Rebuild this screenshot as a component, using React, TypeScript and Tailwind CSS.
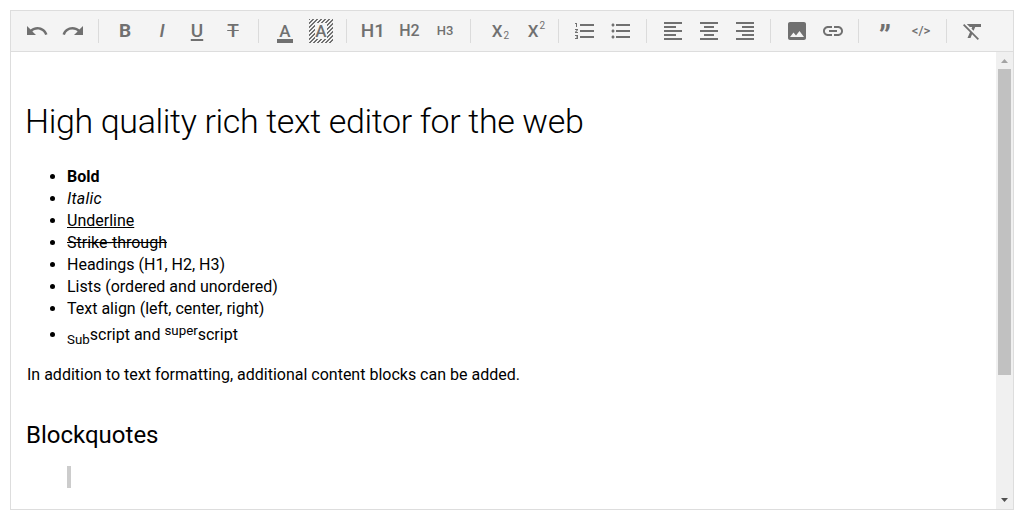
import React from "react";
import {
  MdUndo, MdRedo, MdFormatListNumbered, MdFormatListBulleted, MdFormatAlignLeft,
  MdFormatAlignCenter, MdFormatAlignRight, MdImage, MdFormatClear, MdInsertLink,
} from "react-icons/md";

function Group({ children, last = false }: { children: React.ReactNode; last?: boolean }) {
  return (
    <div className="flex items-center">
      <div className="flex pl-2 pr-[7px]">{children}</div>
      {!last && <div className="h-6 w-px bg-[#dbdbdb]" />}
    </div>
  );
}

function Tool({ label, children }: { label: string; children: React.ReactNode }) {
  return (
    <button aria-label={label} className="flex h-10 w-9 items-center justify-center whitespace-nowrap text-[19px] leading-6 font-medium text-[#707070]">
      {children}
    </button>
  );
}

function Toolbar() {
  return (
    <div className="flex h-[41px] shrink-0 border-b border-[#dddddd] bg-[#f4f4f4]">
      <Group>
        <Tool label="Undo"><MdUndo size={24} /></Tool>
        <Tool label="Redo"><MdRedo size={24} /></Tool>
      </Group>
      <Group>
        <Tool label="Bold"><span className="font-bold">B</span></Tool>
        <Tool label="Italic"><span className="pl-0.5 italic">I</span></Tool>
        <Tool label="Underline"><span className="underline decoration-2 underline-offset-2">U</span></Tool>
        <Tool label="Strike-through"><span className="line-through">T</span></Tool>
      </Group>
      <Group>
        <Tool label="Text color">
          <span className="flex h-6 w-4 flex-col items-center justify-between text-[17px]">
            <span className="h-5">A</span>
            <span className="h-1 w-4 shrink-0 bg-[#707070]" />
          </span>
        </Tool>
        <Tool label="Background color">
          <span className="flex h-6 w-6 items-center justify-center bg-[repeating-linear-gradient(135deg,#707070_0px,#707070_1.414px,#f4f4f4_1.414px,#f4f4f4_2.828px)] text-[17px]">
            <span className="h-4 w-3 bg-[#f4f4f4] text-center leading-4">A</span>
          </span>
        </Tool>
      </Group>
      <Group>
        <Tool label="Heading 1"><span>H1</span></Tool>
        <Tool label="Heading 2"><span className="pl-px text-[16px]">H2</span></Tool>
        <Tool label="Heading 3"><span className="text-[13px]">H3</span></Tool>
      </Group>
      <Group>
        <Tool label="Subscript"><span className="flex h-6 pl-[7px] text-[17px]">X<span className="pt-[5px] pl-px text-[10px] font-normal">2</span></span></Tool>
        <Tool label="Superscript"><span className="flex h-6 pl-[7px] text-[17px]">X<span className="-mt-[5px] pl-px text-[10px] font-normal">2</span></span></Tool>
      </Group>
      <Group>
        <Tool label="Ordered list"><MdFormatListNumbered size={24} /></Tool>
        <Tool label="Unordered list"><MdFormatListBulleted size={24} /></Tool>
      </Group>
      <Group>
        <Tool label="Align left"><MdFormatAlignLeft size={24} /></Tool>
        <Tool label="Align center"><MdFormatAlignCenter size={24} /></Tool>
        <Tool label="Align right"><MdFormatAlignRight size={24} /></Tool>
      </Group>
      <Group>
        <Tool label="Image"><MdImage size={24} /></Tool>
        <Tool label="Link"><MdInsertLink size={24} /></Tool>
      </Group>
      <Group>
        <Tool label="Blockquote"><span className="pt-2.5 text-[32px]">”</span></Tool>
        <Tool label="Code"><span className="text-[13px]">&lt;/&gt;</span></Tool>
      </Group>
      <Group last>
        <Tool label="Clear formatting"><MdFormatClear size={24} /></Tool>
      </Group>
    </div>
  );
}

function Scrollbar() {
  return (
    <div className="flex w-[17px] shrink-0 flex-col items-center bg-[#f0f0f0]">
      <svg className="h-[17px] w-[17px] shrink-0" viewBox="0 0 17 17"><path d="M5 11 8.5 7 12 11Z" fill="#a3a3a3" /></svg>
      <div className="h-[306px] w-[13px] bg-[#c1c1c1]" />
      <div className="flex-1" />
      <svg className="h-[17px] w-[17px] shrink-0" viewBox="0 0 17 17"><path d="M5 6 8.5 10 12 6Z" fill="#505050" /></svg>
    </div>
  );
}

export default function App() {
  return (
    <div className="h-[520px] bg-white p-2.5 font-[Roboto,sans-serif] text-black">
      <div className="flex h-[500px] w-[1004px] flex-col border border-[#dddddd]">
        <Toolbar />
        <div className="flex min-h-0 flex-1">
          <div className="min-w-0 flex-1 overflow-hidden pl-4">
            <h1 className="-ml-[2px] mt-[49px] text-[34px] leading-10 font-light tracking-[-0.36px]">High quality rich text editor for the web</h1>
            <ul className="mt-[25px] list-disc pl-10 text-[16px] leading-[22px]">
              <li><b>Bold</b></li>
              <li><i className="tracking-[0.25px]">Italic</i></li>
              <li><u>Underline</u></li>
              <li><s>Strike-through</s></li>
              <li>Headings (H1, H2, H3)</li>
              <li>Lists (ordered and unordered)</li>
              <li>Text align (left, center, right)</li>
              <li className="pt-1"><sub className="-bottom-1 text-[13.33px]">Sub</sub>script and <sup className="-top-[5px] text-[13.33px]">super</sup>script</li>
            </ul>
            <p className="mt-[18px] text-[16px] leading-[22px]">In addition to text formatting, additional content blocks can be added.</p>
            <h2 className="-ml-px mt-[33px] text-[24px] leading-8">Blockquotes</h2>
            <blockquote className="mt-[15px] ml-10 h-[22px] border-l-4 border-[#cccccc]" />
          </div>
          <Scrollbar />
        </div>
      </div>
    </div>
  );
}
